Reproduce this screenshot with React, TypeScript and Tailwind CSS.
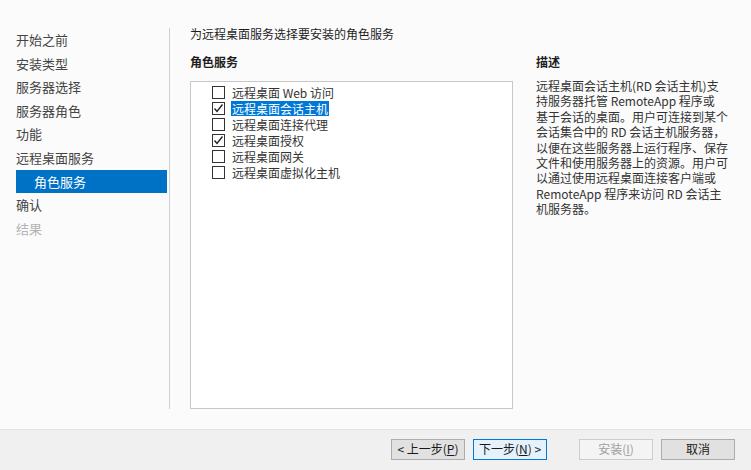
const NAV = [
  { label: "开始之前" },
  { label: "安装类型" },
  { label: "服务器选择" },
  { label: "服务器角色" },
  { label: "功能" },
  { label: "远程桌面服务" },
  { label: "角色服务", sub: true, active: true },
  { label: "确认" },
  { label: "结果", disabled: true },
];

const SERVICES = [
  { label: "远程桌面 Web 访问", checked: false },
  { label: "远程桌面会话主机", checked: true, selected: true },
  { label: "远程桌面连接代理", checked: false },
  { label: "远程桌面授权", checked: true },
  { label: "远程桌面网关", checked: false },
  { label: "远程桌面虚拟化主机", checked: false },
];

const DESC = [
  "远程桌面会话主机(RD 会话主机)支",
  "持服务器托管 RemoteApp 程序或",
  "基于会话的桌面。用户可连接到某个",
  "会话集合中的 RD 会话主机服务器，",
  "以便在这些服务器上运行程序、保存",
  "文件和使用服务器上的资源。用户可",
  "以通过使用远程桌面连接客户端或",
  "RemoteApp 程序来访问 RD 会话主",
  "机服务器。",
];

function Checkbox({ checked }: { checked: boolean }) {
  return (
    <span className="w-[13px] h-[13px] border border-[#333] bg-white flex items-center justify-center shrink-0">
      {checked && (
        <svg width="11" height="11" viewBox="0 0 11 11">
          <path d="M1.5 5.5 L4 8.5 L9.5 1.5" fill="none" stroke="#222" strokeWidth="1.4" />
        </svg>
      )}
    </span>
  );
}

function Button({ children, primary, disabled }: { children: React.ReactNode; primary?: boolean; disabled?: boolean }) {
  let cls = "border-[#adadad] bg-[#e1e1e1] text-[#1a1a1a]";
  if (primary) cls = "border-[#0078d7] bg-[#e5f1fb] text-[#1a1a1a]";
  if (disabled) cls = "border-[#cccccc] bg-[#f4f4f4] text-[#a0a0a0]";
  return (
    <div className={`w-[74px] h-[21px] border flex items-center justify-center text-[12px] ${cls}`}>
      {children}
    </div>
  );
}

export default function App() {
  return (
    <div
      className="w-[751px] h-[470px] bg-[#fbfbfb] flex flex-col text-[#1e1e1e] overflow-hidden"
      style={{ fontFamily: '"Noto Sans CJK SC", "Noto Sans", sans-serif' }}
    >
      <div className="flex-1 flex">
        {/* Wizard steps */}
        <div className="w-[170px] mt-[28px] mb-[20px] pl-4 pr-[2px] border-r border-[#cfcfcf]">
          {NAV.map((n) => (
            <div
              key={n.label}
              className={`h-[23.6px] flex items-center text-[13px] ${n.sub ? "pl-[18px]" : ""} ${
                n.active ? "bg-[#0072c6] text-white" : n.disabled ? "text-[#b4b4b4]" : "text-[#444]"
              }`}
            >
              {n.label}
            </div>
          ))}
        </div>

        {/* Content */}
        <div className="flex-1 pl-[20px] pt-[24px] flex flex-col">
          <div className="text-[12px] h-[20px] leading-[20px]">为远程桌面服务选择要安装的角色服务</div>
          <div className="flex gap-[23px] mt-[9px] flex-1 pb-[20px]">
            <div className="w-[323px] flex flex-col">
              <div className="text-[12px] font-bold h-[18px] leading-[18px]">角色服务</div>
              <div className="mt-[10px] flex-1 border border-[#c8c8c8] bg-white pt-[2px] pl-[21px]">
                {SERVICES.map((s) => (
                  <div key={s.label} className="h-[16px] flex items-center gap-[6px] text-[12px]">
                    <Checkbox checked={s.checked} />
                    <span className={`px-[1px] leading-[15px] ${s.selected ? "bg-[#0078d7] text-white" : "text-[#333]"}`}>
                      {s.label}
                    </span>
                  </div>
                ))}
              </div>
            </div>
            <div className="flex flex-col">
              <div className="text-[12px] font-bold h-[18px] leading-[18px]">描述</div>
              <div className="mt-[7px] text-[12px] leading-[15.4px] text-[#333]">
                {DESC.map((l) => (
                  <div key={l} className="whitespace-nowrap">{l}</div>
                ))}
              </div>
            </div>
          </div>
        </div>
      </div>

      {/* Footer buttons */}
      <div className="h-[41px] bg-[#f0f0f0] border-t border-[#e3e3e3] flex items-center justify-end pr-[16px] pb-[2px]">
        <div className="flex gap-[8px]">
          <Button>&lt; 上一步(<u>P</u>)</Button>
          <Button primary>下一步(<u>N</u>) &gt;</Button>
        </div>
        <div className="flex gap-[8px] ml-[32px]">
          <Button disabled>安装(<u>I</u>)</Button>
          <Button>取消</Button>
        </div>
      </div>
    </div>
  );
}
